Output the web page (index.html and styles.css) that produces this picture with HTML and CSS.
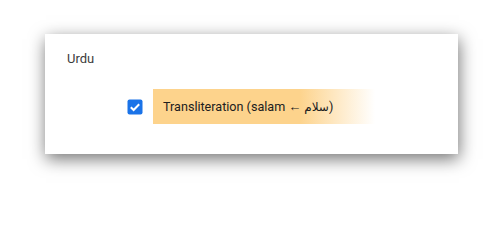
FILE: index.html
```html
<!DOCTYPE html>
<html>
<head>
<meta charset="utf-8">
<link rel="stylesheet" href="styles.css">
</head>
<body>
<div class="card">
  <div class="title">Urdu</div>
  <label class="option">
    <span class="check">
      <svg width="16" height="16" viewBox="0 0 16 16"><rect x="0.5" y="0.5" width="15" height="15" rx="2" fill="#1a73e8"/><path d="M3.8 8.2 L6.6 11 L12.2 5.2" fill="none" stroke="#fff" stroke-width="2"/></svg>
    </span>
    <span class="label">Transliteration (salam <span class="arrow">←</span> <span dir="rtl" class="urdu">سلام</span>)</span>
  </label>
</div>
</body>
</html>
```
FILE: styles.css
```css
html, body { margin: 0; padding: 0; background: #fff; }
body {
  width: 503px;
  height: 204px;
  padding: 34px 0 0 45px;
  box-sizing: border-box;
  overflow: hidden;
  font-family: Roboto, "Noto Sans", "DejaVu Sans", sans-serif;
}
.card {
  width: 413px;
  height: 120px;
  box-sizing: border-box;
  background: #fff;
  box-shadow: 1px 5px 16px rgba(0,0,0,0.55);
  padding: 17px 0 0 22px;
}
.title {
  font-size: 13px;
  line-height: 16px;
  color: #3c3c3c;
  font-weight: 400;
}
.option {
  display: flex;
  align-items: center;
  margin-top: 22px;
  margin-left: 60px;
}
.check {
  display: flex;
  width: 16px;
  height: 16px;
  margin-right: 10px;
}
.label {
  display: flex;
  align-items: center;
  width: 222px;
  height: 35px;
  box-sizing: border-box;
  padding-left: 10px;
  font-size: 12.6px;
  color: #202020;
  background: linear-gradient(to right, #fdd38c 0%, #fdd38c 66%, #ffffff 100%);
  white-space: nowrap;
}
.arrow { font-family: "Liberation Sans", sans-serif; font-size: 13px; margin: 0 3px; }
.urdu { font-family: "DejaVu Sans", sans-serif; font-size: 12px; }
```
